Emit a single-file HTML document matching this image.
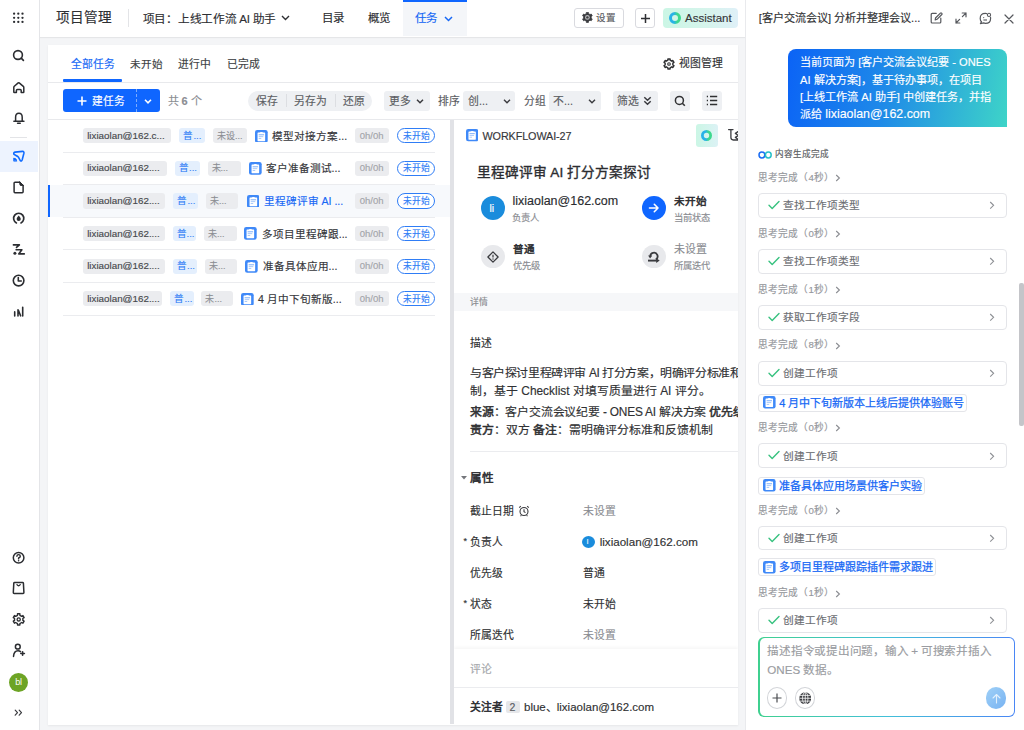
<!DOCTYPE html>
<html lang="zh-CN"><head><meta charset="utf-8">
<style>
*{box-sizing:border-box;margin:0;padding:0}
html,body{width:1024px;height:730px;overflow:hidden;background:#f4f5f7;font-family:"Liberation Sans",sans-serif;color:#303133;position:relative}
.a{position:absolute;white-space:nowrap;-webkit-text-stroke:0.15px}
svg{display:block}
/* sidebar */
#side{position:absolute;z-index:2;left:0;top:0;width:39.8px;height:730px;background:#fff;border-right:1px solid #e4e5e8}
.si{position:absolute;left:12px;width:13px;height:13px}
/* header */
#hdr{position:absolute;left:39px;top:0;width:707px;height:37px;background:#fff;box-shadow:0 1px 1px rgba(0,0,0,.06)}
/* card */
#card{position:absolute;left:47.5px;top:44.5px;width:690.5px;height:680px;background:#fff;box-shadow:0 1px 2px rgba(0,0,0,.06)}
/* right panel */
#rp{position:absolute;left:745.3px;top:0;width:278.7px;height:730px;background:#fff;border-left:1px solid #e9eaed}
</style></head><body>

<div id="side">
<div style="position:absolute;left:0;top:140.5px;width:38px;height:31px;background:#edf3fe"></div>
<div style="position:absolute;left:9.5px;top:136.5px;width:17px;height:1px;background:#e3e4e7"></div>
<svg width="39" height="730" style="position:absolute;left:0;top:0" fill="none" stroke="#2b2d31" stroke-width="1.5" stroke-linecap="round" stroke-linejoin="round">
<g fill="#2b2d31" stroke="none">
<circle cx="14.1" cy="13.7" r="1.15"/><circle cx="18.3" cy="13.7" r="1.15"/><circle cx="22.5" cy="13.7" r="1.15"/>
<circle cx="14.1" cy="17.8" r="1.15"/><circle cx="18.3" cy="17.8" r="1.15"/><circle cx="22.5" cy="17.8" r="1.15"/>
<circle cx="14.1" cy="21.9" r="1.15"/><circle cx="18.3" cy="21.9" r="1.15"/><circle cx="22.5" cy="21.9" r="1.15"/>
</g>
<circle cx="18" cy="55" r="4.4" stroke-width="1.6"/><path d="M21.2 58.2 L23.4 60.4" stroke-width="1.7"/>
<path d="M16.4 92.6 H14.3 Q13.8 92.6 13.8 92 V87.4 Q13.8 86.8 14.3 86.3 L18.2 82.9 Q18.7 82.5 19.2 82.9 L23.3 86.3 Q23.8 86.8 23.8 87.4 V92 Q23.8 92.6 23.3 92.6 H21.2 V90.6 Q21.2 89.6 20.2 89.6 H17.4 Q16.4 89.6 16.4 90.6 Z"/>
<path d="M15.6 121 V117.2 Q15.6 113.2 18.9 113.2 Q22.2 113.2 22.2 117.2 V121"/><path d="M13.9 121.2 H23.9" stroke-width="1.6"/><path d="M17.6 123.3 H20.2" stroke-width="1.6"/>
<path d="M14 154.3 Q13.2 152.6 15 152.1 L22.6 151.4 Q24.2 151.5 23.9 153.2 L22.2 159.8 Q21.6 161.6 20.3 160.6 L18.4 157.2 Q17.6 155.9 16.1 155.6 Z" stroke="#0f6bff" stroke-width="1.6"/>
<path d="M13.7 160.8 V158.1 Q16.5 158.1 16.8 160.8 Z" fill="#0f6bff" stroke="#0f6bff" stroke-width="0.8"/>
<path d="M19.6 182.2 H15 Q14.1 182.2 14.1 183.1 V191.8 Q14.1 192.7 15 192.7 H22.2 Q23.1 192.7 23.1 191.8 V185.6"/><path d="M19.9 181.9 L23.4 185.4 L20.6 185.4 Q19.9 185.4 19.9 184.7 Z" fill="#2b2d31" stroke-width="1"/>
<path d="M16.4 222.9 A5.1 5.1 0 1 1 21 222.9" stroke-width="1.7"/><path d="M18.7 215.6 Q20.8 217.8 20.8 219 Q20.8 220.9 18.7 220.9 Q16.6 220.9 16.6 219 Q16.6 217.8 18.7 215.6Z" fill="#2b2d31" stroke="none"/>
<path d="M13.4 244.9 H19.4 L16.5 247.4" stroke-width="1.6"/><path d="M16.1 249.7 H21.9 L18.7 253.9 H24.3" stroke-width="1.6"/><circle cx="14.9" cy="253.3" r="1.5" fill="#2b2d31" stroke="none"/>
<circle cx="18.6" cy="280.6" r="5.3" stroke-width="1.6"/><path d="M18.3 277.5 V281 H21.3" stroke-width="1.6"/>
<path d="M14.7 311.9 V316 M18 309.8 V316 M18.4 310.4 L20.6 315.8 M22.7 307.3 V316" stroke-width="1.6"/>
<circle cx="18.6" cy="557.8" r="5.3" stroke-width="1.5"/><path d="M16.9 556.3 Q16.9 554.6 18.6 554.6 Q20.3 554.6 20.3 556.2 Q20.3 557.3 18.6 558 V558.9" stroke-width="1.4"/><circle cx="18.6" cy="560.8" r="0.8" fill="#2b2d31" stroke="none"/>
<path d="M14.6 582.4 H22.6 Q23.3 582.4 23.4 583.1 L23.9 592.6 Q23.9 593.4 23.1 593.4 H14.1 Q13.3 593.4 13.3 592.6 L13.8 583.1 Q13.9 582.4 14.6 582.4 Z" stroke-width="1.5"/><path d="M17 584.6 Q18.6 586.9 20.2 584.6" stroke-width="1.3"/>
<path d="M17.51 613.82 L19.89 613.82 L19.89 615.27 L21.69 616.31 L22.94 615.59 L24.12 617.64 L22.87 618.36 L22.87 620.44 L24.12 621.16 L22.94 623.21 L21.69 622.49 L19.89 623.53 L19.89 624.98 L17.51 624.98 L17.51 623.53 L15.71 622.49 L14.46 623.21 L13.28 621.16 L14.53 620.44 L14.53 618.36 L13.28 617.64 L14.46 615.59 L15.71 616.31 L17.51 615.27 Z" stroke-width="1.4"/><circle cx="18.7" cy="619.4" r="1.6" stroke-width="1.3"/>
<circle cx="17.8" cy="646.7" r="2.4" stroke-width="1.5"/><path d="M13.5 656.4 Q14 650.8 18 650.8 Q19.6 650.8 20.5 651.6" stroke-width="1.5"/><path d="M20.8 653.5 H24.4 M22.6 651.7 V655.3" stroke-width="1.6"/>
<path d="M15.2 710.2 L17.5 712.7 L15.2 715.2 M19.2 710.2 L21.5 712.7 L19.2 715.2" stroke="#3a3b3f" stroke-width="1.2"/>
</svg>
<div style="position:absolute;left:9px;top:673px;width:19px;height:19px;border-radius:50%;background:#6da425;color:#fff;font-size:9px;line-height:19px;text-align:center;letter-spacing:-0.2px">bl</div>
</div>
<div id="hdr">
<div class="a" style="left:17px;top:8px;font-size:13.6px;line-height:20px;color:#2e2f33">项目管理</div>
<div style="position:absolute;left:88.5px;top:9px;width:1px;height:18px;background:#e3e4e7"></div>
<div class="a" style="left:103.8px;top:8.5px;font-size:11.6px;line-height:20px;color:#2e2f33;letter-spacing:-0.3px">项目：上线工作流 AI 助手</div>
<svg class="a" style="left:242px;top:15px" width="9" height="6" viewBox="0 0 9 6"><path d="M1 1 L4.5 4.5 L8 1" fill="none" stroke="#2e2f33" stroke-width="1.4"/></svg>
<div class="a" style="left:283.3px;top:8px;font-size:11.5px;line-height:20px;color:#2e2f33">目录</div>
<div class="a" style="left:329px;top:8px;font-size:11.5px;line-height:20px;color:#2e2f33">概览</div>
<div style="position:absolute;left:364px;top:0;width:64px;height:36px;background:#f4f6f9;border-top:2px solid #0f66ff"></div>
<div class="a" style="left:376px;top:8px;font-size:11.5px;line-height:20px;color:#1768f5">任务</div>
<svg class="a" style="left:405px;top:15.5px" width="9" height="6" viewBox="0 0 9 6"><path d="M1 1 L4.5 4.5 L8 1" fill="none" stroke="#1768f5" stroke-width="1.5"/></svg>
<div style="position:absolute;left:534.5px;top:8px;width:50px;height:19.5px;border:1px solid #d9dadf;border-radius:3px;background:#fff"></div>
<svg class="a" style="left:543px;top:12px" width="11" height="11" viewBox="0 0 11 11"><path d="M4.34 0.41 L6.46 0.41 L6.47 1.65 L8.11 2.59 L9.19 1.99 L10.25 3.82 L9.18 4.46 L9.18 6.34 L10.25 6.98 L9.19 8.81 L8.11 8.21 L6.47 9.15 L6.46 10.39 L4.34 10.39 L4.33 9.15 L2.69 8.21 L1.61 8.81 L0.55 6.98 L1.62 6.34 L1.62 4.46 L0.55 3.82 L1.61 1.99 L2.69 2.59 L4.33 1.65 Z" fill="#3a3b3f" stroke="#3a3b3f" stroke-width="0.8" stroke-linejoin="round"/><circle cx="5.4" cy="5.4" r="2.4" fill="#b9babd"/><circle cx="5.4" cy="5.4" r="1.2" fill="#3a3b3f"/></svg>
<div class="a" style="left:557px;top:8px;font-size:9.5px;line-height:20px;color:#5c5e63">设置</div>
<div style="position:absolute;left:596px;top:8px;width:20px;height:19.5px;border:1px solid #d9dadf;border-radius:3px;background:#fff"></div>
<svg class="a" style="left:600.5px;top:12.5px" width="11" height="11" viewBox="0 0 11 11"><path d="M5.5 1 V10 M1 5.5 H10" stroke="#2e2f33" stroke-width="1.5"/></svg>
<div style="position:absolute;left:624px;top:8px;width:75px;height:20px;border-radius:4px;background:linear-gradient(90deg,#cbf6e5,#d6f4ec 60%,#dff0f8)"></div>
<svg class="a" style="left:630px;top:12px" width="12" height="12" viewBox="0 0 12 12"><defs><linearGradient id="rg1" x1="0" x2="1"><stop offset=".35" stop-color="#28b2e8"/><stop offset=".75" stop-color="#3cd88e"/></linearGradient></defs><circle cx="6" cy="6" r="4.5" fill="none" stroke="url(#rg1)" stroke-width="3"/></svg>
<div class="a" style="left:646px;top:8px;font-size:11.5px;line-height:20px;color:#35363a">Assistant</div>
</div>
<div id="card"></div>
<div id="cl">
<div style="position:absolute;left:47.5px;top:184.70px;width:402.70px;height:32.60px;background:#f7f9fc"></div>
<div style="position:absolute;left:47.5px;top:184.70px;width:2.50px;height:32.60px;background:#0f66ff"></div>
<div style="position:absolute;left:83.4px;top:128.20px;width:87.60px;height:15.30px;background:#ebecef;border-radius:3px"></div>
<div class="a" style="left:87.2px;top:125.80px;font-size:9.8px;line-height:20px;color:#46484c;font-weight:400;">lixiaolan@162.c...</div>
<div style="position:absolute;left:179.4px;top:128.20px;width:25.60px;height:15.30px;background:#e4effd;border-radius:3px"></div>
<div class="a" style="left:183.4px;top:125.80px;font-size:9.5px;line-height:20px;color:#3481f6;font-weight:400;">普...</div>
<div style="position:absolute;left:213px;top:128.20px;width:34.30px;height:15.30px;background:#ebecef;border-radius:3px"></div>
<div class="a" style="left:217px;top:125.80px;font-size:9px;line-height:20px;color:#8c8e93;font-weight:400;">未设...</div>
<svg class="a" style="left:255.4px;top:129.50px" width="12.7" height="12.7" viewBox="0 0 13 13"><rect x="0" y="0" width="13" height="13" rx="2.3" fill="#3f89f8"/><rect x="2.6" y="2.6" width="7.8" height="8.8" rx="0.5" fill="#fff"/><path d="M4.3 3.3 Q6.5 0.9 8.7 3.3 Z" fill="#fff"/><path d="M3.7 4.9 H9.3" stroke="#3f89f8" stroke-width="0.7"/><path d="M3.8 6.8 H8.5 M3.8 8.7 H6.4" stroke="#8fbaf9" stroke-width="0.8"/></svg>
<div class="a" style="left:272.3px;top:125.80px;font-size:10.6px;line-height:20px;color:#35363a;font-weight:400;">模型对接方案...</div>
<div style="position:absolute;left:354.8px;top:128.20px;width:34.30px;height:15.30px;background:#ebecef;border-radius:3px"></div>
<div class="a" style="left:359.8px;top:125.80px;font-size:9.5px;line-height:20px;color:#a3a5aa;font-weight:400;">0h/0h</div>
<div style="position:absolute;left:397.2px;top:128.10px;width:37.40px;height:15.40px;border:1px solid #2f7df6;border-radius:8px;background:#fff"></div>
<div class="a" style="left:402.5px;top:125.80px;font-size:8.7px;line-height:20px;color:#2f7df6;font-weight:400;">未开始</div>
<div style="position:absolute;left:63px;top:151.60px;width:372.00px;height:1.00px;background:#ebecef"></div>
<div style="position:absolute;left:83.4px;top:160.80px;width:83.60px;height:15.30px;background:#ebecef;border-radius:3px"></div>
<div class="a" style="left:87.2px;top:158.40px;font-size:9.8px;line-height:20px;color:#46484c;font-weight:400;">lixiaolan@162....</div>
<div style="position:absolute;left:175px;top:160.80px;width:24.60px;height:15.30px;background:#e4effd;border-radius:3px"></div>
<div class="a" style="left:179px;top:158.40px;font-size:9.5px;line-height:20px;color:#3481f6;font-weight:400;">普...</div>
<div style="position:absolute;left:207.5px;top:160.80px;width:33.10px;height:15.30px;background:#ebecef;border-radius:3px"></div>
<div class="a" style="left:211.5px;top:158.40px;font-size:9px;line-height:20px;color:#8c8e93;font-weight:400;">未...</div>
<svg class="a" style="left:249px;top:162.10px" width="12.7" height="12.7" viewBox="0 0 13 13"><rect x="0" y="0" width="13" height="13" rx="2.3" fill="#3f89f8"/><rect x="2.6" y="2.6" width="7.8" height="8.8" rx="0.5" fill="#fff"/><path d="M4.3 3.3 Q6.5 0.9 8.7 3.3 Z" fill="#fff"/><path d="M3.7 4.9 H9.3" stroke="#3f89f8" stroke-width="0.7"/><path d="M3.8 6.8 H8.5 M3.8 8.7 H6.4" stroke="#8fbaf9" stroke-width="0.8"/></svg>
<div class="a" style="left:265.6px;top:158.40px;font-size:10.6px;line-height:20px;color:#35363a;font-weight:400;">客户准备测试...</div>
<div style="position:absolute;left:354.8px;top:160.80px;width:34.30px;height:15.30px;background:#ebecef;border-radius:3px"></div>
<div class="a" style="left:359.8px;top:158.40px;font-size:9.5px;line-height:20px;color:#a3a5aa;font-weight:400;">0h/0h</div>
<div style="position:absolute;left:397.2px;top:160.70px;width:37.40px;height:15.40px;border:1px solid #2f7df6;border-radius:8px;background:#fff"></div>
<div class="a" style="left:402.5px;top:158.40px;font-size:8.7px;line-height:20px;color:#2f7df6;font-weight:400;">未开始</div>
<div style="position:absolute;left:63px;top:184.20px;width:372.00px;height:1.00px;background:#ebecef"></div>
<div style="position:absolute;left:83.4px;top:193.40px;width:81.90px;height:15.30px;background:#ebecef;border-radius:3px"></div>
<div class="a" style="left:87.2px;top:191.00px;font-size:9.8px;line-height:20px;color:#46484c;font-weight:400;">lixiaolan@162....</div>
<div style="position:absolute;left:173.4px;top:193.40px;width:24.60px;height:15.30px;background:#e4effd;border-radius:3px"></div>
<div class="a" style="left:177.4px;top:191.00px;font-size:9.5px;line-height:20px;color:#3481f6;font-weight:400;">普...</div>
<div style="position:absolute;left:206px;top:193.40px;width:32.00px;height:15.30px;background:#ebecef;border-radius:3px"></div>
<div class="a" style="left:210px;top:191.00px;font-size:9px;line-height:20px;color:#8c8e93;font-weight:400;">未...</div>
<svg class="a" style="left:246.7px;top:194.70px" width="12.7" height="12.7" viewBox="0 0 13 13"><rect x="0" y="0" width="13" height="13" rx="2.3" fill="#3f89f8"/><rect x="2.6" y="2.6" width="7.8" height="8.8" rx="0.5" fill="#fff"/><path d="M4.3 3.3 Q6.5 0.9 8.7 3.3 Z" fill="#fff"/><path d="M3.7 4.9 H9.3" stroke="#3f89f8" stroke-width="0.7"/><path d="M3.8 6.8 H8.5 M3.8 8.7 H6.4" stroke="#8fbaf9" stroke-width="0.8"/></svg>
<div class="a" style="left:263.5px;top:191.00px;font-size:10.6px;line-height:20px;color:#1768f5;font-weight:400;">里程碑评审 AI ...</div>
<div style="position:absolute;left:354.8px;top:193.40px;width:34.30px;height:15.30px;background:#ebecef;border-radius:3px"></div>
<div class="a" style="left:359.8px;top:191.00px;font-size:9.5px;line-height:20px;color:#a3a5aa;font-weight:400;">0h/0h</div>
<div style="position:absolute;left:397.2px;top:193.30px;width:37.40px;height:15.40px;border:1px solid #2f7df6;border-radius:8px;background:#fff"></div>
<div class="a" style="left:402.5px;top:191.00px;font-size:8.7px;line-height:20px;color:#2f7df6;font-weight:400;">未开始</div>
<div style="position:absolute;left:63px;top:216.80px;width:372.00px;height:1.00px;background:#ebecef"></div>
<div style="position:absolute;left:83.4px;top:226.00px;width:81.30px;height:15.30px;background:#ebecef;border-radius:3px"></div>
<div class="a" style="left:87.2px;top:223.60px;font-size:9.8px;line-height:20px;color:#46484c;font-weight:400;">lixiaolan@162....</div>
<div style="position:absolute;left:172.5px;top:226.00px;width:23.50px;height:15.30px;background:#e4effd;border-radius:3px"></div>
<div class="a" style="left:176.5px;top:223.60px;font-size:9.5px;line-height:20px;color:#3481f6;font-weight:400;">普...</div>
<div style="position:absolute;left:204px;top:226.00px;width:32.70px;height:15.30px;background:#ebecef;border-radius:3px"></div>
<div class="a" style="left:208px;top:223.60px;font-size:9px;line-height:20px;color:#8c8e93;font-weight:400;">未...</div>
<svg class="a" style="left:244.4px;top:227.30px" width="12.7" height="12.7" viewBox="0 0 13 13"><rect x="0" y="0" width="13" height="13" rx="2.3" fill="#3f89f8"/><rect x="2.6" y="2.6" width="7.8" height="8.8" rx="0.5" fill="#fff"/><path d="M4.3 3.3 Q6.5 0.9 8.7 3.3 Z" fill="#fff"/><path d="M3.7 4.9 H9.3" stroke="#3f89f8" stroke-width="0.7"/><path d="M3.8 6.8 H8.5 M3.8 8.7 H6.4" stroke="#8fbaf9" stroke-width="0.8"/></svg>
<div class="a" style="left:261.7px;top:223.60px;font-size:10.6px;line-height:20px;color:#35363a;font-weight:400;">多项目里程碑跟...</div>
<div style="position:absolute;left:354.8px;top:226.00px;width:34.30px;height:15.30px;background:#ebecef;border-radius:3px"></div>
<div class="a" style="left:359.8px;top:223.60px;font-size:9.5px;line-height:20px;color:#a3a5aa;font-weight:400;">0h/0h</div>
<div style="position:absolute;left:397.2px;top:225.90px;width:37.40px;height:15.40px;border:1px solid #2f7df6;border-radius:8px;background:#fff"></div>
<div class="a" style="left:402.5px;top:223.60px;font-size:8.7px;line-height:20px;color:#2f7df6;font-weight:400;">未开始</div>
<div style="position:absolute;left:63px;top:249.40px;width:372.00px;height:1.00px;background:#ebecef"></div>
<div style="position:absolute;left:83.4px;top:258.60px;width:81.90px;height:15.30px;background:#ebecef;border-radius:3px"></div>
<div class="a" style="left:87.2px;top:256.20px;font-size:9.8px;line-height:20px;color:#46484c;font-weight:400;">lixiaolan@162....</div>
<div style="position:absolute;left:173px;top:258.60px;width:24.00px;height:15.30px;background:#e4effd;border-radius:3px"></div>
<div class="a" style="left:177px;top:256.20px;font-size:9.5px;line-height:20px;color:#3481f6;font-weight:400;">普...</div>
<div style="position:absolute;left:205px;top:258.60px;width:32.30px;height:15.30px;background:#ebecef;border-radius:3px"></div>
<div class="a" style="left:209px;top:256.20px;font-size:9px;line-height:20px;color:#8c8e93;font-weight:400;">未...</div>
<svg class="a" style="left:245.4px;top:259.90px" width="12.7" height="12.7" viewBox="0 0 13 13"><rect x="0" y="0" width="13" height="13" rx="2.3" fill="#3f89f8"/><rect x="2.6" y="2.6" width="7.8" height="8.8" rx="0.5" fill="#fff"/><path d="M4.3 3.3 Q6.5 0.9 8.7 3.3 Z" fill="#fff"/><path d="M3.7 4.9 H9.3" stroke="#3f89f8" stroke-width="0.7"/><path d="M3.8 6.8 H8.5 M3.8 8.7 H6.4" stroke="#8fbaf9" stroke-width="0.8"/></svg>
<div class="a" style="left:262.6px;top:256.20px;font-size:10.6px;line-height:20px;color:#35363a;font-weight:400;">准备具体应用...</div>
<div style="position:absolute;left:354.8px;top:258.60px;width:34.30px;height:15.30px;background:#ebecef;border-radius:3px"></div>
<div class="a" style="left:359.8px;top:256.20px;font-size:9.5px;line-height:20px;color:#a3a5aa;font-weight:400;">0h/0h</div>
<div style="position:absolute;left:397.2px;top:258.50px;width:37.40px;height:15.40px;border:1px solid #2f7df6;border-radius:8px;background:#fff"></div>
<div class="a" style="left:402.5px;top:256.20px;font-size:8.7px;line-height:20px;color:#2f7df6;font-weight:400;">未开始</div>
<div style="position:absolute;left:63px;top:282.00px;width:372.00px;height:1.00px;background:#ebecef"></div>
<div style="position:absolute;left:83.4px;top:291.20px;width:78.80px;height:15.30px;background:#ebecef;border-radius:3px"></div>
<div class="a" style="left:87.2px;top:288.80px;font-size:9.8px;line-height:20px;color:#46484c;font-weight:400;">lixiaolan@162....</div>
<div style="position:absolute;left:170.4px;top:291.20px;width:23.20px;height:15.30px;background:#e4effd;border-radius:3px"></div>
<div class="a" style="left:174.4px;top:288.80px;font-size:9.5px;line-height:20px;color:#3481f6;font-weight:400;">普...</div>
<div style="position:absolute;left:201.4px;top:291.20px;width:31.60px;height:15.30px;background:#ebecef;border-radius:3px"></div>
<div class="a" style="left:205.4px;top:288.80px;font-size:9px;line-height:20px;color:#8c8e93;font-weight:400;">未...</div>
<svg class="a" style="left:241.4px;top:292.50px" width="12.7" height="12.7" viewBox="0 0 13 13"><rect x="0" y="0" width="13" height="13" rx="2.3" fill="#3f89f8"/><rect x="2.6" y="2.6" width="7.8" height="8.8" rx="0.5" fill="#fff"/><path d="M4.3 3.3 Q6.5 0.9 8.7 3.3 Z" fill="#fff"/><path d="M3.7 4.9 H9.3" stroke="#3f89f8" stroke-width="0.7"/><path d="M3.8 6.8 H8.5 M3.8 8.7 H6.4" stroke="#8fbaf9" stroke-width="0.8"/></svg>
<div class="a" style="left:258px;top:288.80px;font-size:10.6px;line-height:20px;color:#35363a;font-weight:400;">4 月中下旬新版...</div>
<div style="position:absolute;left:354.8px;top:291.20px;width:34.30px;height:15.30px;background:#ebecef;border-radius:3px"></div>
<div class="a" style="left:359.8px;top:288.80px;font-size:9.5px;line-height:20px;color:#a3a5aa;font-weight:400;">0h/0h</div>
<div style="position:absolute;left:397.2px;top:291.10px;width:37.40px;height:15.40px;border:1px solid #2f7df6;border-radius:8px;background:#fff"></div>
<div class="a" style="left:402.5px;top:288.80px;font-size:8.7px;line-height:20px;color:#2f7df6;font-weight:400;">未开始</div>
<div style="position:absolute;left:63px;top:314.60px;width:372.00px;height:1.00px;background:#ebecef"></div>
<div class="a" style="left:71px;top:53.5px;font-size:10.8px;line-height:20px;color:#1768f5;font-weight:400;">全部任务</div>
<div class="a" style="left:130px;top:53.5px;font-size:10.6px;line-height:20px;color:#3d3f43;font-weight:400;">未开始</div>
<div class="a" style="left:178.4px;top:53.5px;font-size:10.8px;line-height:20px;color:#3d3f43;font-weight:400;">进行中</div>
<div class="a" style="left:226.6px;top:53.5px;font-size:10.8px;line-height:20px;color:#3d3f43;font-weight:400;">已完成</div>
<div style="position:absolute;left:63px;top:79px;width:59px;height:2.5px;background:#0f66ff;border-radius:1px"></div>
<div style="position:absolute;left:47.5px;top:81.5px;width:690.5px;height:1px;background:#e8e9ec"></div>
<svg class="a" style="left:662.5px;top:57.5px" width="12" height="12" viewBox="0 0 12 12"><path d="M4.92 0.91 L7.08 0.91 L7.10 2.15 L8.78 3.12 L9.86 2.52 L10.95 4.39 L9.88 5.03 L9.88 6.97 L10.95 7.61 L9.86 9.48 L8.78 8.88 L7.10 9.85 L7.08 11.09 L4.92 11.09 L4.90 9.85 L3.22 8.88 L2.14 9.48 L1.05 7.61 L2.12 6.97 L2.12 5.03 L1.05 4.39 L2.14 2.52 L3.22 3.12 L4.90 2.15 Z" fill="none" stroke="#303133" stroke-width="1.5" stroke-linejoin="round"/><circle cx="6" cy="6" r="1.3" fill="none" stroke="#303133" stroke-width="1.1"/></svg>
<div class="a" style="left:679px;top:53.0px;font-size:10.8px;line-height:20px;color:#303133;font-weight:400;">视图管理</div>
<div style="position:absolute;left:63px;top:89px;width:96.5px;height:23px;background:#0f66ff;border-radius:3px"></div>
<div style="position:absolute;left:136.2px;top:89px;width:0px;height:23px;border-left:1px dashed rgba(255,255,255,.45)"></div>
<svg class="a" style="left:77px;top:96px" width="10" height="10" viewBox="0 0 10 10"><path d="M5 0.5 V9.5 M0.5 5 H9.5" stroke="#fff" stroke-width="1.6"/></svg>
<div class="a" style="left:92px;top:90.8px;font-size:10.8px;line-height:20px;color:#fff;font-weight:400;">建任务</div>
<svg class="a" style="left:143.8px;top:98.5px" width="8" height="5" viewBox="0 0 8 5"><path d="M1 0.8 L4 3.8 L7 0.8" fill="none" stroke="#fff" stroke-width="1.6"/></svg>
<div class="a" style="left:167.5px;top:90.8px;font-size:11px;line-height:20px;color:#8b8d93;font-weight:400;">共 <span style="font-weight:700">6</span> 个</div>
<div style="position:absolute;left:248px;top:90.5px;width:124px;height:20px;background:#eef0f3;border-radius:10px"></div>
<div style="position:absolute;left:285.5px;top:94px;width:1px;height:13px;background:#dcdee2"></div>
<div style="position:absolute;left:334.5px;top:94px;width:1px;height:13px;background:#dcdee2"></div>
<div class="a" style="left:255.5px;top:90.8px;font-size:10.8px;line-height:20px;color:#5b5d62;font-weight:400;">保存</div>
<div class="a" style="left:294px;top:90.8px;font-size:10.8px;line-height:20px;color:#5b5d62;font-weight:400;">另存为</div>
<div class="a" style="left:342.5px;top:90.8px;font-size:10.8px;line-height:20px;color:#5b5d62;font-weight:400;">还原</div>
<div style="position:absolute;left:384px;top:90.5px;width:46px;height:20px;background:#eef0f3;border-radius:3px"></div>
<div class="a" style="left:388.5px;top:90.8px;font-size:10.8px;line-height:20px;color:#5b5d62;font-weight:400;">更多</div>
<svg class="a" style="left:416px;top:98.5px" width="8" height="5" viewBox="0 0 8 5"><path d="M1 0.8 L4 3.8 L7 0.8" fill="none" stroke="#3a3b3f" stroke-width="1.5"/></svg>
<div class="a" style="left:438px;top:90.8px;font-size:10.8px;line-height:20px;color:#5b5d62;font-weight:400;">排序</div>
<div style="position:absolute;left:463.3px;top:90.5px;width:52px;height:20px;background:#eef0f3;border-radius:3px"></div>
<div class="a" style="left:468px;top:90.8px;font-size:10.8px;line-height:20px;color:#5b5d62;font-weight:400;">创...</div>
<svg class="a" style="left:503px;top:98.5px" width="8" height="5" viewBox="0 0 8 5"><path d="M1 0.8 L4 3.8 L7 0.8" fill="none" stroke="#3a3b3f" stroke-width="1.4"/></svg>
<div class="a" style="left:523.5px;top:90.8px;font-size:10.8px;line-height:20px;color:#5b5d62;font-weight:400;">分组</div>
<div style="position:absolute;left:548.9px;top:90.5px;width:52px;height:20px;background:#eef0f3;border-radius:3px"></div>
<div class="a" style="left:553px;top:90.8px;font-size:10.8px;line-height:20px;color:#5b5d62;font-weight:400;">不...</div>
<svg class="a" style="left:588px;top:98.5px" width="8" height="5" viewBox="0 0 8 5"><path d="M1 0.8 L4 3.8 L7 0.8" fill="none" stroke="#3a3b3f" stroke-width="1.4"/></svg>
<div style="position:absolute;left:612.5px;top:90.5px;width:45.7px;height:20px;background:#eef0f3;border-radius:3px"></div>
<div class="a" style="left:617px;top:90.8px;font-size:10.8px;line-height:20px;color:#5b5d62;font-weight:400;">筛选</div>
<svg class="a" style="left:643px;top:95.5px" width="9" height="10" viewBox="0 0 9 10"><path d="M1.3 1.3 L4.5 4.3 L7.7 1.3 M1.3 5.3 L4.5 8.3 L7.7 5.3" fill="none" stroke="#3a3b3f" stroke-width="1.5"/></svg>
<div style="position:absolute;left:670px;top:90.5px;width:20px;height:20px;background:#eef0f3;border-radius:3px"></div>
<svg class="a" style="left:674px;top:94.5px" width="12" height="12" viewBox="0 0 12 12"><circle cx="5.4" cy="5.4" r="4" fill="none" stroke="#303133" stroke-width="1.5"/><path d="M8.3 8.3 L10.8 10.8" stroke="#303133" stroke-width="1.6"/></svg>
<div style="position:absolute;left:702px;top:90.5px;width:20px;height:20px;background:#eef0f3;border-radius:3px"></div>
<svg class="a" style="left:706px;top:95px" width="12" height="11" viewBox="0 0 12 11"><path d="M0.8 1.5 H2 M4 1.5 H11.2 M0.8 5.5 H2 M4 5.5 H11.2 M0.8 9.5 H2 M4 9.5 H11.2" stroke="#303133" stroke-width="1.6"/></svg>
<div style="position:absolute;left:47.5px;top:119px;width:690.5px;height:1px;background:#e8e9ec"></div>
<div style="position:absolute;left:450.2px;top:120px;width:3.7px;height:604.4px;background:#e1e2e6"></div>
<div id="det" style="position:absolute;left:454px;top:120px;width:284px;height:604.4px;overflow:hidden;background:#fff">
<svg class="a" style="left:11.5px;top:9.400000000000006px" width="12.3" height="12.3" viewBox="0 0 13 13"><rect x="0" y="0" width="13" height="13" rx="2.3" fill="#3f89f8"/><rect x="2.6" y="2.6" width="7.8" height="8.8" rx="0.5" fill="#fff"/><path d="M4.3 3.3 Q6.5 0.9 8.7 3.3 Z" fill="#fff"/><path d="M3.7 4.9 H9.3" stroke="#3f89f8" stroke-width="0.7"/><path d="M3.8 6.8 H8.5 M3.8 8.7 H6.4" stroke="#8fbaf9" stroke-width="0.8"/></svg>
<div class="a" style="left:28.5px;top:5.80px;font-size:10.8px;line-height:20px;color:#35363a;font-weight:400;letter-spacing:-0.1px">WORKFLOWAI-27</div>
<div style="position:absolute;left:241.5px;top:3.80px;width:22.80px;height:22.80px;background:linear-gradient(90deg,#cbf6e5,#dcf2f5);border-radius:3px"></div>
<svg class="a" style="left:247.1px;top:9.7px" width="11" height="11" viewBox="0 0 11 11"><defs><linearGradient id="rg2" x1="0" x2="1"><stop offset=".35" stop-color="#28b2e8"/><stop offset=".75" stop-color="#3cd88e"/></linearGradient></defs><circle cx="5.5" cy="5.5" r="4.1" fill="none" stroke="url(#rg2)" stroke-width="2.8"/></svg>
<svg class="a" style="left:272px;top:7px" width="12" height="16" viewBox="0 0 12 16"><path d="M2.6 2.6 H7 M4.9 2.6 V10.6 Q4.9 13 7.3 13 H12 M12 4.6 L9.4 6.4 L12 8.2 M12 8.6 L9.4 10.4 L12 12.2" fill="none" stroke="#3a3b3f" stroke-width="1.3" stroke-linecap="round" stroke-linejoin="round"/></svg>
<div class="a" style="left:22.600000000000023px;top:42.80px;font-size:13.6px;line-height:20px;color:#2b2c30;font-weight:400;-webkit-text-stroke:0.35px">里程碑评审 AI 打分方案探讨</div>
<div style="position:absolute;left:26.899999999999977px;top:76.40px;width:24.00px;height:24.00px;border-radius:50%;background:#1a8cdc"></div>
<div class="a" style="left:35.5px;top:78.20px;font-size:10.5px;line-height:20px;color:#fff;font-weight:400;">li</div>
<div class="a" style="left:58.39999999999998px;top:71.20px;font-size:12.5px;line-height:20px;color:#2b2c30;font-weight:400;">lixiaolan@162.com</div>
<div class="a" style="left:58.39999999999998px;top:87.80px;font-size:9.3px;line-height:20px;color:#8a8c91;font-weight:400;">负责人</div>
<div style="position:absolute;left:188.39999999999998px;top:76.40px;width:23.80px;height:23.80px;border-radius:50%;background:#0f66ff"></div>
<svg class="a" style="left:194.29999999999995px;top:82.30000000000001px" width="12" height="12" viewBox="0 0 12 12"><path d="M1.5 6 H10 M6.3 2.3 L10 6 L6.3 9.7" fill="none" stroke="#fff" stroke-width="1.6" stroke-linecap="round" stroke-linejoin="round"/></svg>
<div class="a" style="left:220.20000000000005px;top:71.30px;font-size:10.6px;line-height:20px;color:#2b2c30;font-weight:400;-webkit-text-stroke:0.5px;">未开始</div>
<div class="a" style="left:220.20000000000005px;top:88.00px;font-size:9.3px;line-height:20px;color:#8a8c91;font-weight:400;">当前状态</div>
<div style="position:absolute;left:26.899999999999977px;top:124.70px;width:24.00px;height:23.60px;border-radius:50%;background:#e8e9ec"></div>
<svg class="a" style="left:32.89999999999998px;top:130.5px" width="12" height="12" viewBox="0 0 12 12"><path d="M6 0.9 L11.1 6 L6 11.1 L0.9 6 Z" fill="none" stroke="#3a3b3f" stroke-width="1.3" stroke-linejoin="round"/><path d="M6 3.7 V6.4" stroke="#3a3b3f" stroke-width="1.2"/><circle cx="6" cy="8" r="0.7" fill="#3a3b3f"/></svg>
<div class="a" style="left:59px;top:119.00px;font-size:10.6px;line-height:20px;color:#2b2c30;font-weight:400;-webkit-text-stroke:0.5px;">普通</div>
<div class="a" style="left:59px;top:136.30px;font-size:9.3px;line-height:20px;color:#8a8c91;font-weight:400;">优先级</div>
<div style="position:absolute;left:188.39999999999998px;top:124.70px;width:23.80px;height:23.60px;border-radius:50%;background:#e8e9ec"></div>
<svg class="a" style="left:194.3px;top:130.5px" width="12" height="12" viewBox="0 0 12 12"><path d="M2.4 5.8 A3.6 3.6 0 1 1 7.8 8.4" fill="none" stroke="#3a3b3f" stroke-width="1.8"/><path d="M0.1 4.4 L4.2 4.5 L2.1 7.6 Z" fill="#3a3b3f"/><path d="M0 9.6 H8.8" stroke="#3a3b3f" stroke-width="1.9"/><path d="M8.2 7.2 L11.7 9.6 L8.2 12 Z" fill="#3a3b3f"/></svg>
<div class="a" style="left:220.20000000000005px;top:119.00px;font-size:10.9px;line-height:20px;color:#8a8c91;font-weight:400;">未设置</div>
<div class="a" style="left:220.20000000000005px;top:136.30px;font-size:9.3px;line-height:20px;color:#8a8c91;font-weight:400;">所属迭代</div>
<div style="position:absolute;left:0px;top:173.00px;width:284.00px;height:17.60px;background:#f6f7f9"></div>
<div class="a" style="left:16px;top:172.00px;font-size:8.8px;line-height:20px;color:#8a8c91;font-weight:400;">详情</div>
<div class="a" style="left:16px;top:212.50px;font-size:10.8px;line-height:20px;color:#303133;font-weight:400;">描述</div>
<div class="a" style="left:16px;top:242.50px;font-size:11.9px;line-height:20px;color:#303133;font-weight:400;letter-spacing:-0.4px">与客户探讨里程碑评审 AI 打分方案，明确评分标准和反馈机制，</div>
<div class="a" style="left:16px;top:261.30px;font-size:11.9px;line-height:20px;color:#303133;font-weight:400;">制，基于 Checklist 对填写质量进行 AI 评分。</div>
<div class="a" style="left:16px;top:281.50px;font-size:11.9px;line-height:20px;color:#303133;font-weight:400;letter-spacing:-0.2px"><span style="-webkit-text-stroke:0.5px">来源</span>：客户交流会议纪要 - ONES AI 解决方案 <span style="-webkit-text-stroke:0.5px">优先级</span>：高</div>
<div class="a" style="left:16px;top:300.30px;font-size:11.9px;line-height:20px;color:#303133;font-weight:400;"><span style="-webkit-text-stroke:0.5px">责方</span>：双方 <span style="-webkit-text-stroke:0.5px">备注</span>：需明确评分标准和反馈机制</div>
<div style="position:absolute;left:16px;top:331.20px;width:268.00px;height:1.00px;background:#ebecef"></div>
<svg class="a" style="left:6.800000000000011px;top:356px" width="6" height="4" viewBox="0 0 6 4"><path d="M0 0 H6 L3 3.6 Z" fill="#75777c"/></svg>
<div class="a" style="left:16px;top:347.80px;font-size:11.6px;line-height:20px;color:#2b2c30;font-weight:400;-webkit-text-stroke:0.5px;">属性</div>
<div class="a" style="left:16px;top:380.80px;font-size:10.8px;line-height:20px;color:#303133;font-weight:400;">截止日期</div>
<div class="a" style="left:128.70000000000005px;top:380.80px;font-size:10.8px;line-height:20px;color:#8a8c91;font-weight:400;">未设置</div>
<div class="a" style="left:16px;top:411.90px;font-size:10.8px;line-height:20px;color:#303133;font-weight:400;">负责人</div>
<div class="a" style="left:9.5px;top:410.90px;font-size:9px;line-height:20px;color:#303133;font-weight:400;">*</div>
<div class="a" style="left:16px;top:443.00px;font-size:10.8px;line-height:20px;color:#303133;font-weight:400;">优先级</div>
<div class="a" style="left:128.70000000000005px;top:443.00px;font-size:10.8px;line-height:20px;color:#303133;font-weight:400;">普通</div>
<div class="a" style="left:16px;top:473.80px;font-size:10.8px;line-height:20px;color:#303133;font-weight:400;">状态</div>
<div class="a" style="left:9.5px;top:472.80px;font-size:9px;line-height:20px;color:#303133;font-weight:400;">*</div>
<div class="a" style="left:128.70000000000005px;top:473.80px;font-size:10.8px;line-height:20px;color:#303133;font-weight:400;">未开始</div>
<div class="a" style="left:16px;top:504.90px;font-size:10.8px;line-height:20px;color:#303133;font-weight:400;">所属迭代</div>
<div class="a" style="left:128.70000000000005px;top:504.90px;font-size:10.8px;line-height:20px;color:#8a8c91;font-weight:400;">未设置</div>
<svg class="a" style="left:63.5px;top:385px" width="12" height="12" viewBox="0 0 12 12"><circle cx="6" cy="6.5" r="4" fill="none" stroke="#3a3b3f" stroke-width="1.1"/><path d="M6 4.3 V6.7 L7.5 7.6 M1.2 2.6 L2.8 1.2 M10.8 2.6 L9.2 1.2 M3.4 10.4 L2.5 11.2 M8.6 10.4 L9.5 11.2" fill="none" stroke="#3a3b3f" stroke-width="1.1"/></svg>
<div style="position:absolute;left:128px;top:416.00px;width:13.00px;height:12.00px;border-radius:50%;background:#1a8cdc"></div>
<div class="a" style="left:132.79999999999995px;top:411.70px;font-size:7px;line-height:20px;color:#fff;font-weight:400;">l</div>
<div class="a" style="left:145.70000000000005px;top:411.90px;font-size:11.6px;line-height:20px;color:#303133;font-weight:400;">lixiaolan@162.com</div>
<div style="position:absolute;left:0px;top:529.30px;width:284.00px;height:75.00px;background:#fff;box-shadow:0 -2px 3px rgba(0,0,0,.035)"></div>
<div class="a" style="left:16px;top:538.80px;font-size:10.8px;line-height:20px;color:#a5a7ab;font-weight:400;">评论</div>
<div style="position:absolute;left:0px;top:567.00px;width:284.00px;height:1.00px;background:#ebecef"></div>
<div class="a" style="left:16px;top:576.60px;font-size:10.8px;line-height:20px;color:#2b2c30;font-weight:400;-webkit-text-stroke:0.5px;">关注者</div>
<div style="position:absolute;left:52px;top:580.60px;width:13.70px;height:12.60px;background:#e6e7ea;border-radius:2px"></div>
<div class="a" style="left:55.5px;top:576.80px;font-size:10.5px;line-height:20px;color:#5b5d62;font-weight:400;">2</div>
<div class="a" style="left:70px;top:576.80px;font-size:11.5px;line-height:20px;color:#303133;font-weight:400;">blue、lixiaolan@162.com</div>
</div>
</div>
<div id="rp">
<div class="a" style="left:12.50px;top:8.30px;font-size:11.1px;line-height:20px;color:#303133;font-weight:400;">[客户交流会议] 分析并整理会议...</div>
<svg class="a" style="left:184.00px;top:12.00px" width="13" height="12" viewBox="0 0 13 12" ><path d="M6.2 1.4 H2.2 Q1.2 1.4 1.2 2.4 V10 Q1.2 11 2.2 11 H9.8 Q10.8 11 10.8 10 V6.2" fill="none" stroke="#56585d" stroke-width="1.2" stroke-linecap="round"/><path d="M5.2 8 L5.5 6 L10.4 1.1 Q11 0.6 11.6 1.1 L11.8 1.3 Q12.3 1.9 11.8 2.5 L7 7.3 Z" fill="none" stroke="#56585d" stroke-width="1.2" stroke-linejoin="round"/></svg>
<svg class="a" style="left:208.30px;top:12.00px" width="12" height="12" viewBox="0 0 12 12" ><path d="M7.2 1 H11 V4.8 M11 1 L7.4 4.6 M4.8 11 H1 V7.2 M1 11 L4.6 7.4" fill="none" stroke="#56585d" stroke-width="1.2" stroke-linecap="round" stroke-linejoin="round"/></svg>
<svg class="a" style="left:232.30px;top:12.00px" width="13" height="13" viewBox="0 0 13 13" ><path d="M8.2 1.8 Q7.4 1.4 6.4 1.4 Q1.2 1.4 1.2 6.4 Q1.2 8.6 2.5 9.8 L1.4 11.6 L4.6 10.9 Q5.4 11.3 6.4 11.3 Q11.6 11.3 11.6 6.4 Q11.6 5.6 11.4 4.9" fill="none" stroke="#56585d" stroke-width="1.2" stroke-linejoin="round"/><circle cx="10" cy="2.9" r="1.6" fill="none" stroke="#56585d" stroke-width="1.1"/><circle cx="4.7" cy="5.6" r="0.6" fill="#56585d"/><path d="M4.4 8 H8" stroke="#56585d" stroke-width="1.1"/></svg>
<svg class="a" style="left:257.70px;top:13.50px" width="10" height="10" viewBox="0 0 10 10" ><path d="M1 1 L9 9 M9 1 L1 9" stroke="#56585d" stroke-width="1.2" stroke-linecap="round"/></svg>
<div style="position:absolute;left:41.30px;top:49.00px;width:219.90px;height:77.90px;border-radius:8px 8px 0 8px;background:linear-gradient(100deg,#0b63f6 0%,#1f8ae8 45%,#3ed4c8 100%)"></div>
<div class="a" style="left:53.80px;top:52.40px;font-size:11.1px;line-height:20px;color:#fff;font-weight:400;">当前页面为 [客户交流会议纪要 - ONES</div>
<div class="a" style="left:53.80px;top:69.50px;font-size:11.1px;line-height:20px;color:#fff;font-weight:400;">AI 解决方案]，基于待办事项，在项目</div>
<div class="a" style="left:53.80px;top:86.60px;font-size:11.1px;line-height:20px;color:#fff;font-weight:400;">[上线工作流 AI 助手] 中创建任务，并指</div>
<div class="a" style="left:53.80px;top:103.70px;font-size:11.1px;line-height:20px;color:#fff;font-weight:400;">派给 <span style="font-size:12.4px">lixiaolan@162.com</span></div>
<svg class="a" style="left:11.50px;top:150.50px" width="15" height="8" viewBox="0 0 15 8"><circle cx="3.9" cy="4" r="2.9" fill="none" stroke="#1a6cf3" stroke-width="1.5"/><circle cx="10.3" cy="4" r="2.9" fill="none" stroke="#27c0c8" stroke-width="1.5"/></svg>
<div class="a" style="left:28.50px;top:144.40px;font-size:8.6px;line-height:20px;color:#5b5d62;font-weight:400;">内容生成完成</div>
<div class="a" style="left:12.20px;top:168.00px;font-size:9.7px;line-height:20px;color:#96989d;font-weight:400;">思考完成（4秒）</div>
<svg class="a" style="left:89.00px;top:174.40px" width="6" height="8" viewBox="0 0 6 8" ><path d="M1.2 1 L4.4 4 L1.2 7" fill="none" stroke="#8a8c91" stroke-width="1.1"/></svg>
<div style="position:absolute;left:12.20px;top:193.00px;width:248.50px;height:24.50px;border:1px solid #e4e5e9;border-radius:4px;background:#fff"></div>
<svg class="a" style="left:21.30px;top:199.80px" width="12" height="10" viewBox="0 0 12 10" ><path d="M1 5.2 L4.2 8.4 L11 1.6" fill="none" stroke="#37c27f" stroke-width="1.4" stroke-linecap="round" stroke-linejoin="round"/></svg>
<div class="a" style="left:37.20px;top:195.30px;font-size:10.7px;line-height:20px;color:#6b6d72;font-weight:400;">查找工作项类型</div>
<svg class="a" style="left:243.00px;top:201.30px" width="6" height="9" viewBox="0 0 6 9" ><path d="M1.2 1 L4.6 4.3 L1.2 7.6" fill="none" stroke="#8e9095" stroke-width="1.1"/></svg>
<div class="a" style="left:12.20px;top:223.60px;font-size:9.7px;line-height:20px;color:#96989d;font-weight:400;">思考完成（0秒）</div>
<svg class="a" style="left:89.00px;top:230.00px" width="6" height="8" viewBox="0 0 6 8" ><path d="M1.2 1 L4.4 4 L1.2 7" fill="none" stroke="#8a8c91" stroke-width="1.1"/></svg>
<div style="position:absolute;left:12.20px;top:249.00px;width:248.50px;height:24.50px;border:1px solid #e4e5e9;border-radius:4px;background:#fff"></div>
<svg class="a" style="left:21.30px;top:255.80px" width="12" height="10" viewBox="0 0 12 10" ><path d="M1 5.2 L4.2 8.4 L11 1.6" fill="none" stroke="#37c27f" stroke-width="1.4" stroke-linecap="round" stroke-linejoin="round"/></svg>
<div class="a" style="left:37.20px;top:251.30px;font-size:10.7px;line-height:20px;color:#6b6d72;font-weight:400;">查找工作项类型</div>
<svg class="a" style="left:243.00px;top:257.30px" width="6" height="9" viewBox="0 0 6 9" ><path d="M1.2 1 L4.6 4.3 L1.2 7.6" fill="none" stroke="#8e9095" stroke-width="1.1"/></svg>
<div class="a" style="left:12.20px;top:279.80px;font-size:9.7px;line-height:20px;color:#96989d;font-weight:400;">思考完成（1秒）</div>
<svg class="a" style="left:89.00px;top:286.20px" width="6" height="8" viewBox="0 0 6 8" ><path d="M1.2 1 L4.4 4 L1.2 7" fill="none" stroke="#8a8c91" stroke-width="1.1"/></svg>
<div style="position:absolute;left:12.20px;top:305.00px;width:248.50px;height:24.50px;border:1px solid #e4e5e9;border-radius:4px;background:#fff"></div>
<svg class="a" style="left:21.30px;top:311.80px" width="12" height="10" viewBox="0 0 12 10" ><path d="M1 5.2 L4.2 8.4 L11 1.6" fill="none" stroke="#37c27f" stroke-width="1.4" stroke-linecap="round" stroke-linejoin="round"/></svg>
<div class="a" style="left:37.20px;top:307.30px;font-size:10.7px;line-height:20px;color:#6b6d72;font-weight:400;">获取工作项字段</div>
<svg class="a" style="left:243.00px;top:313.30px" width="6" height="9" viewBox="0 0 6 9" ><path d="M1.2 1 L4.6 4.3 L1.2 7.6" fill="none" stroke="#8e9095" stroke-width="1.1"/></svg>
<div class="a" style="left:12.20px;top:335.40px;font-size:9.7px;line-height:20px;color:#96989d;font-weight:400;">思考完成（8秒）</div>
<svg class="a" style="left:89.00px;top:341.80px" width="6" height="8" viewBox="0 0 6 8" ><path d="M1.2 1 L4.4 4 L1.2 7" fill="none" stroke="#8a8c91" stroke-width="1.1"/></svg>
<div style="position:absolute;left:12.20px;top:361.00px;width:248.50px;height:24.50px;border:1px solid #e4e5e9;border-radius:4px;background:#fff"></div>
<svg class="a" style="left:21.30px;top:367.80px" width="12" height="10" viewBox="0 0 12 10" ><path d="M1 5.2 L4.2 8.4 L11 1.6" fill="none" stroke="#37c27f" stroke-width="1.4" stroke-linecap="round" stroke-linejoin="round"/></svg>
<div class="a" style="left:37.20px;top:363.30px;font-size:10.7px;line-height:20px;color:#6b6d72;font-weight:400;">创建工作项</div>
<svg class="a" style="left:243.00px;top:369.30px" width="6" height="9" viewBox="0 0 6 9" ><path d="M1.2 1 L4.6 4.3 L1.2 7.6" fill="none" stroke="#8e9095" stroke-width="1.1"/></svg>
<div style="position:absolute;left:12.20px;top:393.70px;width:209.00px;height:18.00px;border:1px solid #e4e5e9;border-radius:3px;background:#fff"></div>
<svg class="a" style="left:16.80px;top:396.30px" width="12.6" height="12.6" viewBox="0 0 12.6 12.6" ><g transform="scale(0.969)"><rect x="0" y="0" width="13" height="13" rx="2.3" fill="#3f89f8"/><rect x="2.6" y="2.6" width="7.8" height="8.8" rx="0.5" fill="#fff"/><path d="M4.3 3.3 Q6.5 0.9 8.7 3.3 Z" fill="#fff"/><path d="M3.7 4.9 H9.3" stroke="#3f89f8" stroke-width="0.7"/><path d="M3.8 6.8 H8.5 M3.8 8.7 H6.4" stroke="#8fbaf9" stroke-width="0.8"/></g></svg>
<div class="a" style="left:33.00px;top:392.70px;font-size:11px;line-height:20px;color:#1768f5;font-weight:400;-webkit-text-stroke:0.25px #1768f5">4 月中下旬新版本上线后提供体验账号</div>
<div class="a" style="left:12.20px;top:418.00px;font-size:9.7px;line-height:20px;color:#96989d;font-weight:400;">思考完成（0秒）</div>
<svg class="a" style="left:89.00px;top:424.40px" width="6" height="8" viewBox="0 0 6 8" ><path d="M1.2 1 L4.4 4 L1.2 7" fill="none" stroke="#8a8c91" stroke-width="1.1"/></svg>
<div style="position:absolute;left:12.20px;top:443.40px;width:248.50px;height:24.50px;border:1px solid #e4e5e9;border-radius:4px;background:#fff"></div>
<svg class="a" style="left:21.30px;top:450.20px" width="12" height="10" viewBox="0 0 12 10" ><path d="M1 5.2 L4.2 8.4 L11 1.6" fill="none" stroke="#37c27f" stroke-width="1.4" stroke-linecap="round" stroke-linejoin="round"/></svg>
<div class="a" style="left:37.20px;top:445.70px;font-size:10.7px;line-height:20px;color:#6b6d72;font-weight:400;">创建工作项</div>
<svg class="a" style="left:243.00px;top:451.70px" width="6" height="9" viewBox="0 0 6 9" ><path d="M1.2 1 L4.6 4.3 L1.2 7.6" fill="none" stroke="#8e9095" stroke-width="1.1"/></svg>
<div style="position:absolute;left:12.20px;top:476.80px;width:166.50px;height:18.00px;border:1px solid #e4e5e9;border-radius:3px;background:#fff"></div>
<svg class="a" style="left:16.80px;top:479.40px" width="12.6" height="12.6" viewBox="0 0 12.6 12.6" ><g transform="scale(0.969)"><rect x="0" y="0" width="13" height="13" rx="2.3" fill="#3f89f8"/><rect x="2.6" y="2.6" width="7.8" height="8.8" rx="0.5" fill="#fff"/><path d="M4.3 3.3 Q6.5 0.9 8.7 3.3 Z" fill="#fff"/><path d="M3.7 4.9 H9.3" stroke="#3f89f8" stroke-width="0.7"/><path d="M3.8 6.8 H8.5 M3.8 8.7 H6.4" stroke="#8fbaf9" stroke-width="0.8"/></g></svg>
<div class="a" style="left:33.00px;top:475.80px;font-size:11px;line-height:20px;color:#1768f5;font-weight:400;-webkit-text-stroke:0.25px #1768f5">准备具体应用场景供客户实验</div>
<div class="a" style="left:12.20px;top:500.80px;font-size:9.7px;line-height:20px;color:#96989d;font-weight:400;">思考完成（0秒）</div>
<svg class="a" style="left:89.00px;top:507.20px" width="6" height="8" viewBox="0 0 6 8" ><path d="M1.2 1 L4.4 4 L1.2 7" fill="none" stroke="#8a8c91" stroke-width="1.1"/></svg>
<div style="position:absolute;left:12.20px;top:525.80px;width:248.50px;height:24.50px;border:1px solid #e4e5e9;border-radius:4px;background:#fff"></div>
<svg class="a" style="left:21.30px;top:532.60px" width="12" height="10" viewBox="0 0 12 10" ><path d="M1 5.2 L4.2 8.4 L11 1.6" fill="none" stroke="#37c27f" stroke-width="1.4" stroke-linecap="round" stroke-linejoin="round"/></svg>
<div class="a" style="left:37.20px;top:528.10px;font-size:10.7px;line-height:20px;color:#6b6d72;font-weight:400;">创建工作项</div>
<svg class="a" style="left:243.00px;top:534.10px" width="6" height="9" viewBox="0 0 6 9" ><path d="M1.2 1 L4.6 4.3 L1.2 7.6" fill="none" stroke="#8e9095" stroke-width="1.1"/></svg>
<div style="position:absolute;left:12.20px;top:558.40px;width:177.30px;height:18.00px;border:1px solid #e4e5e9;border-radius:3px;background:#fff"></div>
<svg class="a" style="left:16.80px;top:561.00px" width="12.6" height="12.6" viewBox="0 0 12.6 12.6" ><g transform="scale(0.969)"><rect x="0" y="0" width="13" height="13" rx="2.3" fill="#3f89f8"/><rect x="2.6" y="2.6" width="7.8" height="8.8" rx="0.5" fill="#fff"/><path d="M4.3 3.3 Q6.5 0.9 8.7 3.3 Z" fill="#fff"/><path d="M3.7 4.9 H9.3" stroke="#3f89f8" stroke-width="0.7"/><path d="M3.8 6.8 H8.5 M3.8 8.7 H6.4" stroke="#8fbaf9" stroke-width="0.8"/></g></svg>
<div class="a" style="left:33.00px;top:557.40px;font-size:11px;line-height:20px;color:#1768f5;font-weight:400;-webkit-text-stroke:0.25px #1768f5">多项目里程碑跟踪插件需求跟进</div>
<div class="a" style="left:12.20px;top:583.40px;font-size:9.7px;line-height:20px;color:#96989d;font-weight:400;">思考完成（1秒）</div>
<svg class="a" style="left:89.00px;top:589.80px" width="6" height="8" viewBox="0 0 6 8" ><path d="M1.2 1 L4.4 4 L1.2 7" fill="none" stroke="#8a8c91" stroke-width="1.1"/></svg>
<div style="position:absolute;left:12.20px;top:608.10px;width:248.50px;height:24.50px;border:1px solid #e4e5e9;border-radius:4px;background:#fff"></div>
<svg class="a" style="left:21.30px;top:614.90px" width="12" height="10" viewBox="0 0 12 10" ><path d="M1 5.2 L4.2 8.4 L11 1.6" fill="none" stroke="#37c27f" stroke-width="1.4" stroke-linecap="round" stroke-linejoin="round"/></svg>
<div class="a" style="left:37.20px;top:610.40px;font-size:10.7px;line-height:20px;color:#6b6d72;font-weight:400;">创建工作项</div>
<svg class="a" style="left:243.00px;top:616.40px" width="6" height="9" viewBox="0 0 6 9" ><path d="M1.2 1 L4.6 4.3 L1.2 7.6" fill="none" stroke="#8e9095" stroke-width="1.1"/></svg>
<div style="position:absolute;left:12.20px;top:636.70px;width:256.60px;height:80.10px;border-radius:6px;background:linear-gradient(90deg,#3fd08f,#42c0d8 50%,#4a86f5)"></div>
<div style="position:absolute;left:13.40px;top:637.90px;width:254.20px;height:77.70px;border-radius:5px;background:#fff"></div>
<div class="a" style="left:21.00px;top:641.00px;font-size:11.6px;line-height:20px;color:#9a9ca1;font-weight:400;letter-spacing:-0.25px">描述指令或提出问题，输入 + 可搜索并插入</div>
<div class="a" style="left:21.00px;top:660.00px;font-size:11.6px;line-height:20px;color:#9a9ca1;font-weight:400;">ONES 数据。</div>
<div style="position:absolute;left:20.40px;top:687.40px;width:20.30px;height:21.20px;border:1px solid #d3d5d9;border-radius:50%;background:#fff"></div>
<svg class="a" style="left:25.50px;top:693.00px" width="10" height="10" viewBox="0 0 10 10" ><path d="M5 0.5 V9.5 M0.5 5 H9.5" stroke="#4a4c50" stroke-width="1.2"/></svg>
<div style="position:absolute;left:48.90px;top:687.40px;width:19.80px;height:21.20px;border:1px solid #d3d5d9;border-radius:50%;background:#fff"></div>
<svg class="a" style="left:52.6px;top:691.7px" width="12.5" height="12.5" viewBox="0 0 12.5 12.5"><circle cx="6.25" cy="6.25" r="6" fill="#3a3b3f"/><path d="M0.3 6.25 H12.2 M6.25 0.3 V12.2 M1 3.4 H11.5 M1 9.1 H11.5" stroke="#fff" stroke-width="0.8"/><ellipse cx="6.25" cy="6.25" rx="2.7" ry="6" fill="none" stroke="#fff" stroke-width="0.8"/></svg>
<div style="position:absolute;left:239.50px;top:687.40px;width:20.50px;height:21.20px;border-radius:50%;background:linear-gradient(135deg,#9fd0f7,#78b3f2)"></div>
<svg class="a" style="left:244.50px;top:692.50px" width="11" height="11" viewBox="0 0 11 11" ><path d="M5.5 10 V1.5 M2 5 L5.5 1.5 L9 5" fill="none" stroke="#fff" stroke-width="1.1" stroke-linecap="round" stroke-linejoin="round" opacity=".75"/></svg>
<div style="position:absolute;left:273.20px;top:283.00px;width:4.80px;height:143.00px;background:#c4c5c9;border-radius:2px"></div>
</div>

</body></html>
